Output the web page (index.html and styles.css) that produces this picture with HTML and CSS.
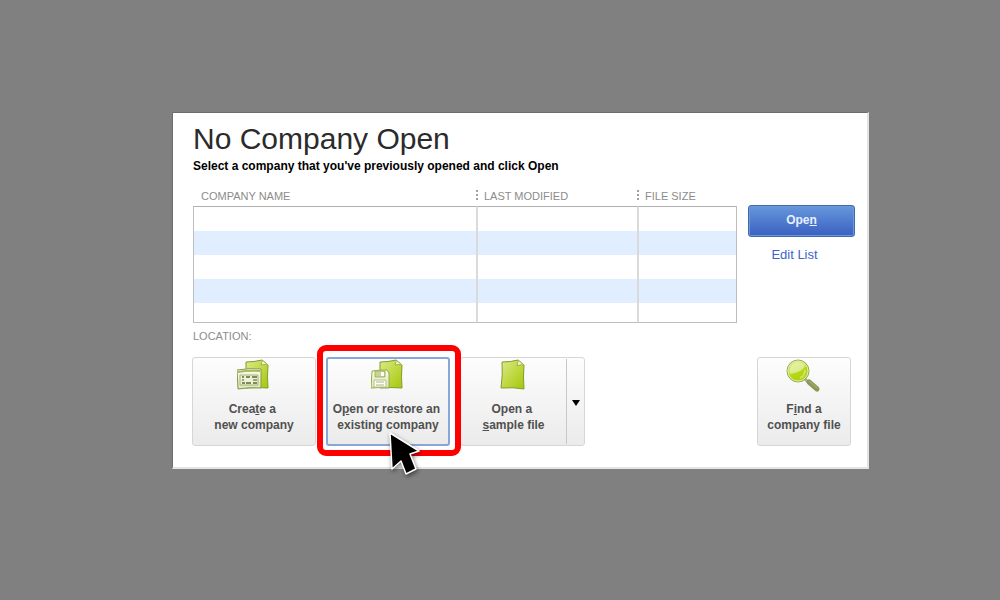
FILE: index.html
```html
<!DOCTYPE html>
<html lang="en">

<head>
    <meta charset="UTF-8">
    <meta name="viewport" content="width=device-width, initial-scale=1.0">
    <title>No Company Open</title>
    <link rel="stylesheet" href="styles.css">
</head>

<body>

    <main class="window">
        <h1>No Company Open</h1>
        <p class="subtitle">Select a company that you've previously opened and click Open</p>

        <div class="files">
            <table class="company-list">
                <thead>
                    <tr>
                        <th>COMPANY NAME</th>
                        <th class="modified">LAST MODIFIED</th>
                        <th class="size">FILE SIZE</th>
                    </tr>
                </thead>
                <tbody>
                    <tr><td></td><td></td><td></td></tr>
                    <tr><td></td><td></td><td></td></tr>
                    <tr><td></td><td></td><td></td></tr>
                    <tr><td></td><td></td><td></td></tr>
                    <tr><td></td><td></td><td></td></tr>
                </tbody>
            </table>
            <div class="side">
                <button class="open-button">Ope<u>n</u></button>
                <a class="edit-link" href="#">Edit List</a>
            </div>
        </div>

        <p class="location">LOCATION:</p>

        <!-- gradients shared by the icons -->
        <svg class="defs" width="0" height="0">
            <defs>
                <linearGradient id="leaf" x1="0" y1="0" x2="1" y2="1">
                    <stop offset="0" stop-color="#dcea8c" />
                    <stop offset="0.5" stop-color="#c0d944" />
                    <stop offset="1" stop-color="#a5c60c" />
                </linearGradient>
                <linearGradient id="pale" x1="0" y1="0" x2="0" y2="1">
                    <stop offset="0" stop-color="#fbfdf0" />
                    <stop offset="1" stop-color="#dce6b4" />
                </linearGradient>
                <linearGradient id="lens" x1="0.2" y1="0" x2="0.7" y2="1">
                    <stop offset="0" stop-color="#dcec80" />
                    <stop offset="0.5" stop-color="#b9d91c" />
                    <stop offset="1" stop-color="#a9cf08" />
                </linearGradient>
            </defs>
        </svg>

        <div class="actions">
            <button class="action">
                <svg width="34" height="32" viewBox="0 0 34 32">
                    <path d="M9 3 Q17 3 25 1 L31 6 Q30 18 31 29 Q20 28 9 29 Z" fill="url(#leaf)" stroke="#819b28" />
                    <path d="M25 1 Q25 4 24 6 Q28 5 31 6 Z" fill="#f1f6cf" stroke="#9db34f" />
                    <path d="M0 11 Q12 9 24 10 L24 29 Q12 28 1 30 Z" fill="url(#pale)" stroke="#859745" />
                    <path d="M1 12 Q12 10 23 11 L23 13 Q12 12 1 14 Z" fill="#a7b866" />
                    <path d="M3 16 H21 V26 H3 Z" fill="#edf1d5" stroke="#a5b078" />
                    <path d="M5 18 h2 M9 18 h4 M15 18 h5 M5 24 h3 M9 24 h5 M16 24 h4" stroke="#7f8a5b" stroke-width="2" />
                    <path d="M5 21 h2 M16 21 h4" stroke="#9ba676" stroke-width="2" />
                </svg>
                <span>Crea<u>t</u>e a&nbsp;<br>new company</span>
            </button>

            <div class="highlight">
                <button class="action focused">
                    <svg width="34" height="32" viewBox="0 0 34 32">
                        <path d="M9 3 Q17 3 25 1 L31 6 Q30 18 31 29 Q20 28 9 29 Z" fill="url(#leaf)" stroke="#819b28" />
                        <path d="M25 1 Q25 4 24 6 Q28 5 31 6 Z" fill="#f1f6cf" stroke="#9db34f" />
                        <path d="M1 12 Q8 11 16 11 L18 14 L18 29 Q9 28 0 29 L1 12 Z" fill="url(#pale)" stroke="#94a84b" />
                        <path d="M4 12 H14 V18 H4 Z" fill="#c7d496" stroke="#a1b364" />
                        <path d="M10 13 h3 v4 h-3 Z" fill="#fff" />
                        <path d="M3 21 H15 V28 H3 Z" fill="#fff" stroke="#b3c178" />
                        <path d="M5 23 h8 M5 26 h8" stroke="#aab87a" />
                    </svg>
                    <span>O<u>p</u>en or restore an&nbsp;<br>existing company</span>
                </button>
                <svg class="pointer" width="36" height="48" viewBox="0 0 36 48">
                    <path d="M3 3 L32 21 L23 24 L29 39 L19 44 L14 31 L5 39 Z" fill="#000" stroke="#fff" stroke-width="1.5" stroke-linejoin="round" />
                </svg>
            </div>

            <div class="split">
                <button class="action">
                    <svg width="34" height="32" viewBox="0 0 34 32">
                        <path d="M5 3 Q14 3 21 1 L27 6 Q26 18 27 30 Q16 28 4 29 Q6 15 5 3 Z" fill="url(#leaf)" stroke="#819b28" />
                        <path d="M21 1 Q21 4 20 7 Q24 5 27 6 Z" fill="#f1f6cf" stroke="#9db34f" />
                    </svg>
                    <span>Open a&nbsp;<br><u>s</u>ample file</span>
                </button>
                <button class="more" aria-label="More sample files">
                    <svg width="8" height="6" viewBox="0 0 8 6">
                        <path d="M0 0 H8 L4 6 Z" fill="#000" />
                    </svg>
                </button>
            </div>

            <button class="action find">
                <svg width="36" height="34" viewBox="0 0 36 34">
                    <path d="M18 19 L23 24" stroke="#a9a9a9" stroke-width="3" />
                    <path d="M23 23 L31 30" stroke="#899a57" stroke-width="5" stroke-linecap="round" />
                    <path d="M23 22 L31 29" stroke="#a9b87c" stroke-width="1" />
                    <circle cx="12" cy="12" r="11" fill="url(#lens)" stroke="#98ac55" />
                    <circle cx="12" cy="12" r="10" fill="none" stroke="#e0ecae" />
                    <path d="M4 15 Q2 5 11 3 Q18 3 19 7 Q18 12 4 15 Z" fill="#f4f9d6" opacity="0.6" />
                    <path d="M14 19 Q19 17 19 11" fill="none" stroke="#cfe25c" stroke-width="2" />
                </svg>
                <span>F<u>i</u>nd a<br>company file</span>
            </button>
        </div>
    </main>

</body>

</html>
```

FILE: styles.css
```css
* {
    margin: 0;
    padding: 0;
    box-sizing: border-box;
}

body {
    font-family: "Liberation Sans", Arial, sans-serif;
    background-color: #808080;
    padding: 112px 131px 112px 172px;
}

.window {
    background-color: white;
    border: 2px solid #e4e4e4;
    border-top-color: #6c6c6c;
    border-left-color: #6c6c6c;
    border-width: 1px 2px 2px 1px;
    padding: 9px 12px 21px 20px;
}

h1 {
    font-size: 30px;
    font-weight: normal;
    line-height: 34px;
    color: #2b2b2b;
}

.subtitle {
    font-size: 12px;
    font-weight: bold;
    line-height: 20px;
    color: black;
}

.files {
    display: flex;
    gap: 11px;
    margin-top: 10px;
}

.company-list {
    flex: 1;
    table-layout: fixed;
    border-collapse: separate;
    border-spacing: 0;
}

.company-list th {
    height: 20px;
    padding-left: 8px;
    font-size: 11px;
    font-weight: normal;
    line-height: 20px;
    text-align: left;
    color: #8c8c8c;
}

.company-list .modified {
    width: 161px;
}

.company-list .size {
    width: 100px;
}

/* dotted grip between the headings */
.company-list .modified,
.company-list .size {
    background: repeating-linear-gradient(#a0a0a0 0 2px, transparent 2px 4px) 0 4px / 2px 10px no-repeat;
}

.company-list td {
    height: 24px;
    border-left: 2px solid #dadada;
}

.company-list td:first-child {
    border-left: 1px solid #bdbdbd;
}

.company-list td:last-child {
    border-right: 1px solid #bdbdbd;
}

.company-list tr:first-child td {
    height: 25px;
    border-top: 1px solid #b0b0b0;
}

.company-list tr:last-child td {
    height: 20px;
    border-bottom: 1px solid #bdbdbd;
}

.company-list tr:nth-child(even) td {
    background-color: #e1eeff;
}

.side {
    width: 107px;
    padding-top: 19px;
    text-align: center;
}

.open-button {
    display: block;
    width: 100%;
    height: 32px;
    padding-bottom: 2px;
    border: 1px solid #3f69ab;
    border-radius: 3px;
    background: linear-gradient(#6697dc, #3a60c0);
    box-shadow: inset 0 0 0 1px #6e98dc;
    color: #e8f0ff;
    font-family: inherit;
    font-size: 12px;
    font-weight: bold;
}

.edit-link {
    display: inline-block;
    margin-top: 8px;
    margin-right: 14px;
    font-size: 13px;
    line-height: 20px;
    color: #3c63cc;
    text-decoration: none;
}

.location {
    margin-top: 3px;
    font-size: 11px;
    line-height: 20px;
    color: #8c8c8c;
}

.defs {
    position: absolute;
}

.actions {
    display: flex;
    gap: 10px;
    margin-top: 11px;
    margin-left: -1px;
}

.action {
    display: flex;
    flex-direction: column;
    align-items: center;
    width: 124px;
    height: 89px;
    padding-top: 1px;
    border: 1px solid #d6d6d6;
    border-radius: 3px;
    background: linear-gradient(#fdfdfd, #ebebeb);
    color: #505050;
    font-family: inherit;
    font-size: 12px;
    font-weight: bold;
    line-height: 16px;
    white-space: nowrap;
}

.action span {
    margin-top: 10px;
}

.highlight {
    position: relative;
}

.highlight::after {
    content: "";
    position: absolute;
    inset: -12px -11px -10px -9px;
    border: 6px solid red;
    border-radius: 9px;
}

.focused {
    border: 2px solid #86a7d8;
    padding-top: 0;
}

.pointer {
    position: absolute;
    z-index: 1;
    top: 73px;
    left: 61px;
    filter: drop-shadow(1px 2px 2px rgba(0, 0, 0, 0.5));
}

.split {
    display: flex;
    width: 125px;
    height: 89px;
    border: 1px solid #d6d6d6;
    border-radius: 3px;
    background: linear-gradient(#fdfdfd, #ebebeb);
}

.split .action {
    flex: 1;
    width: auto;
    height: auto;
    border: none;
    background: none;
}

.more {
    width: 18px;
    margin: 1px 0;
    border: none;
    border-left: 1px solid #c8c8c8;
    background: none;
}

.find {
    width: 94px;
    margin-left: auto;
    margin-right: 4px;
}

.find span {
    margin-top: 8px;
}
```
